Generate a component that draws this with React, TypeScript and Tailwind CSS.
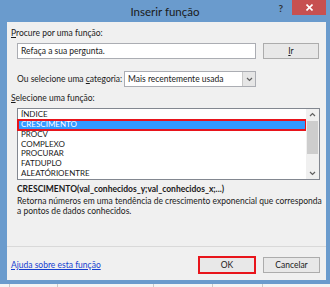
import React from 'react';

const funcs = ['ÍNDICE', 'CRESCIMENTO', 'PROCV', 'COMPLEXO', 'PROCURAR', 'FATDUPLO', 'ALEATÓRIOENTRE'];

const Chevron: React.FC<{ up?: boolean }> = ({ up }) => (
    <svg width="7" height="5" viewBox="0 0 7 5">
        <path d={up ? 'M1 4 L3.5 1.5 L6 4' : 'M1 1 L3.5 3.5 L6 1'} fill="none" stroke="#606060" strokeWidth="1.2" />
    </svg>
);

const App: React.FC = () => {
    return (
        <div className="w-[330px] h-[287px] bg-[#6a9bcd] flex flex-col overflow-hidden font-[Lato,sans-serif] text-[8.5px] text-[#1a1a1a]">
            {/* barra de título */}
            <div className="relative h-[22px] shrink-0">
                <div className="text-center text-[11.5px] leading-[24px] text-[#1a1a1a]">Inserir função</div>
                <div className="absolute right-[4px] top-0 flex items-start">
                    <span className="mr-[9px] mt-[1px] text-[10px] font-bold leading-[14px] text-[#333]">?</span>
                    <div className="w-[34px] h-[15px] bg-[#c75050] flex items-center justify-center">
                        <svg width="7" height="7" viewBox="0 0 7 7">
                            <path d="M0.5 0.5 L6.5 6.5 M6.5 0.5 L0.5 6.5" stroke="#fff" strokeWidth="1.6" />
                        </svg>
                    </div>
                </div>
            </div>

            {/* painel */}
            <div className="ml-[7px] w-[319px] h-[258px] shrink-0 bg-[#f0f0f0] flex flex-col">
                <div className="pl-[4px] pt-[5px] leading-[12px]">
                    <u>P</u>rocure por uma função:
                </div>

                <div className="mt-[4px] pl-[10px] flex">
                    <div className="w-[239px] h-[16px] bg-white border border-[#abadb3] pl-[3px] leading-[14px]">
                        Refaça a sua pergunta.
                    </div>
                    <button className="ml-[7px] w-[56px] h-[16px] bg-[#e8e8e8] border border-[#acacac] leading-[14px]">
                        <u>I</u>r
                    </button>
                </div>

                <div className="mt-[12px] pl-[10px] h-[16px] flex items-center">
                    <div className="w-[107px]">
                        Ou selecione uma <u>c</u>ategoria:
                    </div>
                    <div className="w-[132px] h-[16px] bg-white border border-[#abadb3] flex">
                        <div className="flex-1 pl-[3px] leading-[14px]">Mais recentemente usada</div>
                        <div className="w-[13px] bg-[#e6e6e6] border-l border-[#c8c8c8] flex items-center justify-center">
                            <Chevron />
                        </div>
                    </div>
                </div>

                <div className="mt-[5px] pl-[4px] leading-[12px]">
                    <u>S</u>elecione uma função:
                </div>

                <div className="mt-[4px] ml-[10px] w-[303px] h-[72px] bg-white border border-[#828790] flex">
                    <ul className="flex-1 pt-[1px] text-[8px]">
                        {funcs.map((f) => (
                            <li
                                key={f}
                                className={
                                    f === 'CRESCIMENTO'
                                        ? 'h-[9.85px] leading-[9.85px] pl-[3px] bg-[#3399ff] text-white outline-solid outline-2 outline-[#e8141b] -outline-offset-1'
                                        : 'h-[9.85px] leading-[9.85px] pl-[3px]'
                                }
                            >
                                {f}
                            </li>
                        ))}
                    </ul>
                    <div className="w-[13px] bg-[#f0f0f0] flex flex-col">
                        <div className="h-[11px] flex items-center justify-center">
                            <Chevron up />
                        </div>
                        <div className="mx-[1px] mt-[1px] h-[33px] bg-[#cdcdcd]" />
                        <div className="flex-1" />
                        <div className="h-[11px] flex items-center justify-center">
                            <Chevron />
                        </div>
                    </div>
                </div>

                <div className="mt-[4px] pl-[10px] leading-[11px] font-bold">
                    CRESCIMENTO(val_conhecidos_y;val_conhecidos_x;...)
                </div>
                <div className="mt-[1px] pl-[10px] leading-[10px] text-[8.5px] whitespace-nowrap">
                    Retorna números em uma tendência de crescimento exponencial que corresponda
                    <br />a pontos de dados conhecidos.
                </div>

                <div className="flex-1" />
                <div className="border-t border-[#d9d9d9] h-[34px] pt-[9px] pr-[6px] flex items-start">
                    <div className="h-[18px] flex items-center pl-[4px]">
                        <a href="#" className="text-[#1640d0] underline">
                            Ajuda sobre esta função
                        </a>
                    </div>
                    <div className="flex-1" />
                    <div className="w-[58px] h-[18px] border-2 border-[#e8141b] bg-[#e8e8e8] flex items-center justify-center">
                        OK
                    </div>
                    <div className="ml-[7px] mt-[1px] w-[57px] h-[16px] border border-[#acacac] bg-[#e8e8e8] flex items-center justify-center">
                        Cancelar
                    </div>
                </div>
            </div>

            <div className="h-[4px] shrink-0" />
            <div className="flex-1 bg-[#f4f4f4] flex">
                <div className="w-[10px] border-r border-[#c9c9c9]" />
                <div className="w-[48px] border-r border-[#c9c9c9]" />
                <div className="w-[96px] border-r border-[#c9c9c9]" />
                <div className="w-[59px] border-r border-[#c9c9c9]" />
                <div className="w-[50px] border-r border-[#c9c9c9]" />
            </div>
        </div>
    );
};

export default App;
